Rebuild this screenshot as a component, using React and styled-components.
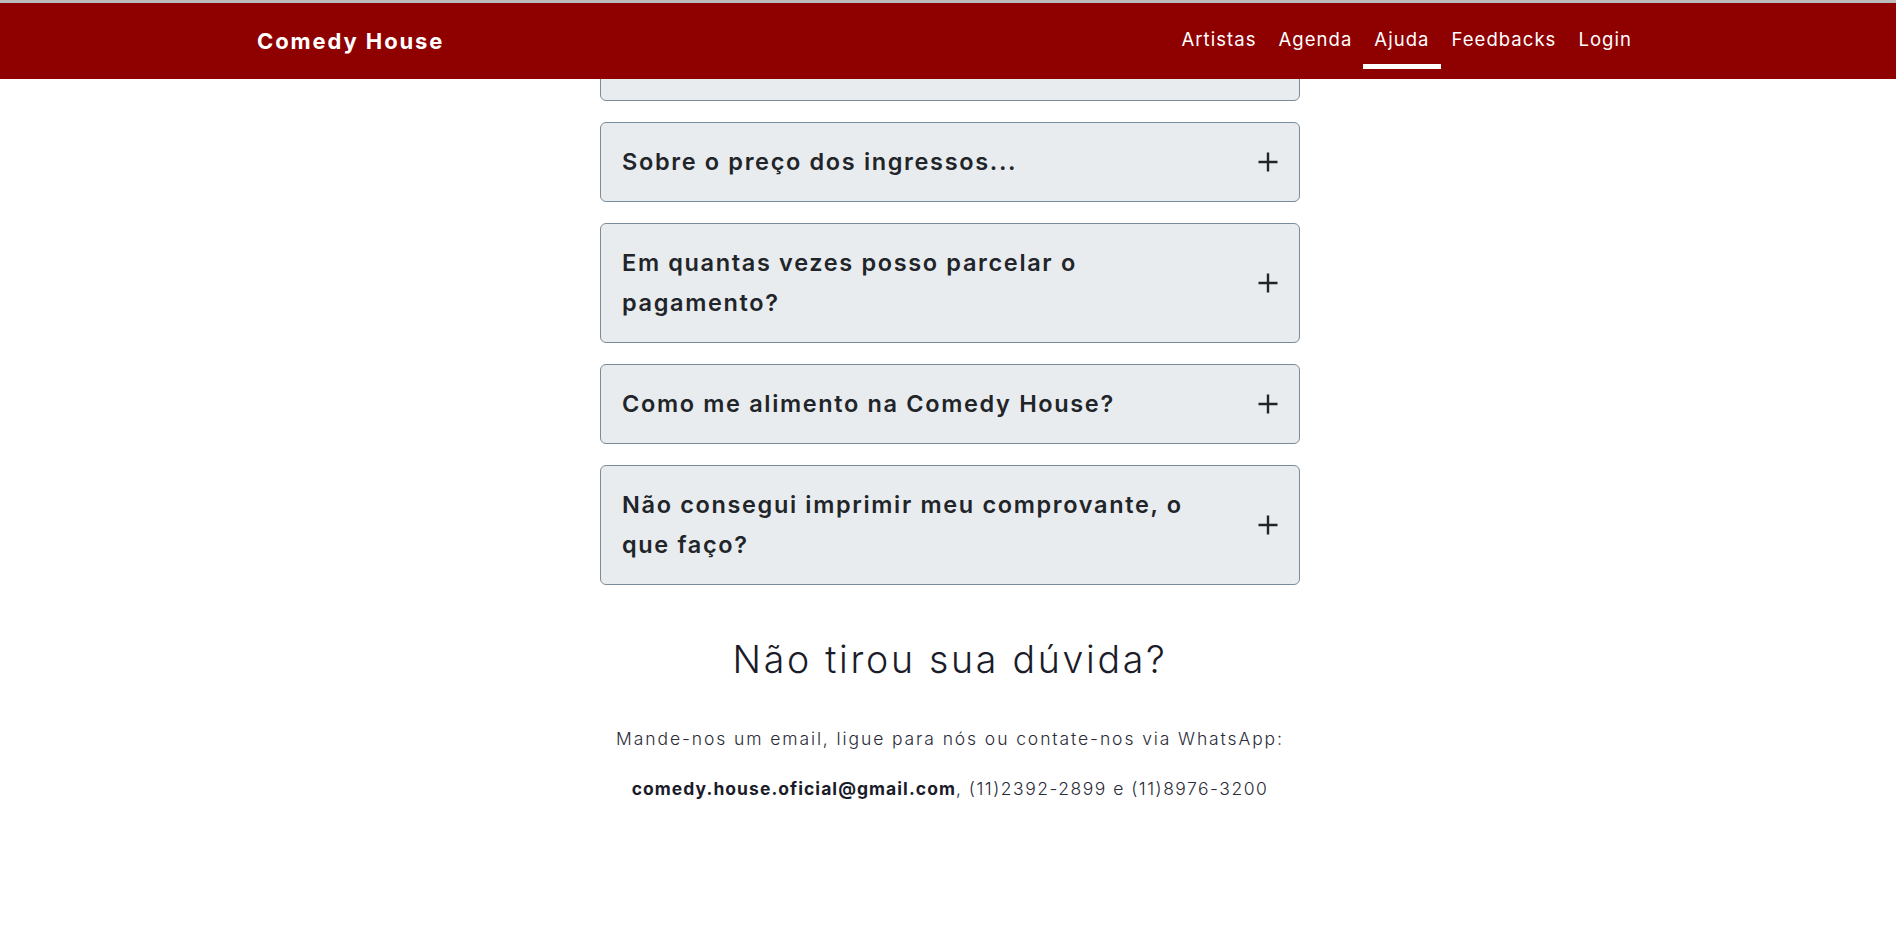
import React from "react";
import styled, { createGlobalStyle } from "styled-components";

const GlobalStyle = createGlobalStyle`
  * { box-sizing: border-box; }
  html, body { margin: 0; padding: 0; background: #ffffff; }
  body {
    font-family: Inter, "Noto Sans", sans-serif;
    color: #212529;
    -webkit-font-smoothing: antialiased;
  }
`;

const Header = styled.header`
  position: fixed;
  top: 0;
  left: 0;
  right: 0;
  z-index: 10;
  height: 79px;
  border-top: 3px solid #bcbcbc;
  background: #8f0000;
  display: flex;
  align-items: center;
  justify-content: space-between;
  padding: 0 253px 0 257px;
`;

const Brand = styled.a`
  color: #ffffff;
  font-size: 22px;
  font-weight: 700;
  line-height: 25px;
  letter-spacing: 1.9px;
  text-decoration: none;
`;

const Nav = styled.nav`
  display: flex;
  align-self: flex-end;
  margin-bottom: 10px;
`;

const NavLink = styled.a`
  color: #ffffff;
  font-size: 18.5px;
  font-weight: 400;
  line-height: 24px;
  letter-spacing: 1.05px;
  padding: 0 11px 13px;
  border-bottom: 5px solid ${(p) => (p.$active ? "#ffffff" : "transparent")};
  text-decoration: none;
`;

const Main = styled.main`
  display: flex;
  flex-direction: column;
  align-items: center;
  padding: 21px 0 120px 4px;
`;

const FaqList = styled.div`
  width: 700px;
  display: flex;
  flex-direction: column;
  gap: 21px;
`;

const FaqItem = styled.button`
  width: 100%;
  display: flex;
  align-items: center;
  justify-content: space-between;
  gap: 40px;
  padding: 19px 21px;
  background: #e9ecef;
  border: 1px solid #7a8c9a;
  border-radius: 6px;
  text-align: left;
  cursor: pointer;
  font-family: inherit;
`;

const Question = styled.span`
  flex: 1;
  color: #212529;
  font-size: 23.5px;
  font-weight: 600;
  line-height: 40px;
  letter-spacing: 1.65px;
`;

const PlusIcon = styled.svg`
  flex: 0 0 20px;
  width: 20px;
  height: 20px;
  color: #212529;
`;

const Title = styled.h2`
  margin: 52px 0 0;
  font-size: 37.5px;
  font-weight: 300;
  line-height: 45px;
  letter-spacing: 2.7px;
  color: #1b1c2a;
  text-align: center;
`;

const Text = styled.p`
  margin: ${(p) => p.$gap}px 0 0;
  font-size: 17.5px;
  font-weight: 300;
  line-height: 27px;
  letter-spacing: ${(p) => p.$spacing}px;
  color: #2a2b38;
  text-align: center;
`;

const Strong = styled.strong`
  font-weight: 700;
  letter-spacing: 1.05px;
  color: #1b1c2a;
`;

const Plus = () => (
  <PlusIcon viewBox="0 0 20 20" fill="none" stroke="currentColor" strokeWidth="2.4">
    <path d="M10 0.5V19.5M0.5 10H19.5" />
  </PlusIcon>
);

const questions = [
  "Como faço para comprar ingressos?",
  "Sobre o preço dos ingressos...",
  "Em quantas vezes posso parcelar o pagamento?",
  "Como me alimento na Comedy House?",
  "Não consegui imprimir meu comprovante, o que faço?",
];

export default function App() {
  return (
    <>
      <GlobalStyle />
      <Header>
        <Brand href="#">Comedy House</Brand>
        <Nav>
          <NavLink href="#">Artistas</NavLink>
          <NavLink href="#">Agenda</NavLink>
          <NavLink href="#" $active>Ajuda</NavLink>
          <NavLink href="#">Feedbacks</NavLink>
          <NavLink href="#">Login</NavLink>
        </Nav>
      </Header>
      <Main>
        <FaqList>
          {questions.map((q) => (
            <FaqItem key={q} type="button">
              <Question>{q}</Question>
              <Plus />
            </FaqItem>
          ))}
        </FaqList>
        <Title>Não tirou sua dúvida?</Title>
        <Text $gap={43} $spacing={1.9}>
          Mande-nos um email, ligue para nós ou contate-nos via WhatsApp:
        </Text>
        <Text $gap={23} $spacing={1.5}>
          <Strong>comedy.house.oficial@gmail.com</Strong>, (11)2392-2899 e (11)8976-3200
        </Text>
      </Main>
    </>
  );
}
